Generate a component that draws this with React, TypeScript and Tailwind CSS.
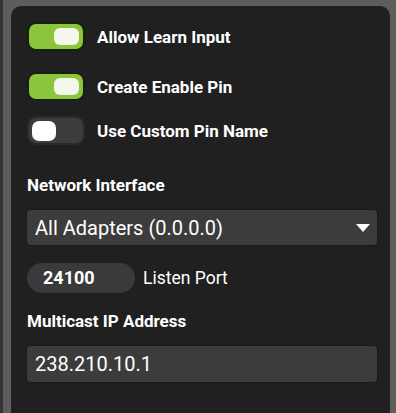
import * as React from "react";

function Toggle({ on }: { on: boolean }) {
  return (
    <div
      className={
        on
          ? "flex h-[29px] w-[58px] items-center justify-end rounded-[9px] border-2 border-[#16210a] bg-[#8cc43c] pr-[4px]"
          : "flex h-[29px] w-[58px] items-center justify-start rounded-[9px] border-2 border-[#2a2a2a] bg-[#3d3d3d] pl-[3px]"
      }
    >
      <div
        className={
          on
            ? "h-[17px] w-[25px] rounded-[6px] bg-[#f4f8ec]"
            : "h-[20px] w-[24px] rounded-[7px] bg-white"
        }
      />
    </div>
  );
}

function ToggleRow({ on, label, className }: { on: boolean; label: string; className?: string }) {
  return (
    <div className={"flex items-center gap-[12px] " + (className ?? "")}>
      <Toggle on={on} />
      <span className="text-[17px] font-bold leading-[20px] text-white">{label}</span>
    </div>
  );
}

export default function App() {
  return (
    <div
      className="flex h-[413px] w-[396px] border-l-[3px] border-[#343434] bg-[#5d5d5d] pl-[8px] pr-[6px] pt-[6px]"
      style={{ fontFamily: "Roboto, 'Liberation Sans', sans-serif" }}
    >
      <div className="flex flex-1 flex-col rounded-t-[10px] bg-[#202020] pl-[16px] pr-[13px] pt-[16px]">
        <ToggleRow on label="Allow Learn Input" />
        <ToggleRow on label="Create Enable Pin" className="mt-[21px]" />
        <ToggleRow on={false} label="Use Custom Pin Name" className="mt-[15px]" />

        <div className="mt-[30px] text-[17px] font-bold leading-[20px] text-white">Network Interface</div>
        <div className="mt-[15px] flex h-[35px] items-center justify-between rounded-[4px] bg-[#3c3c3c] pl-[8px] pr-[7px] shadow-[0_0_0_1px_#1a1a1a]">
          <span className="text-[20px] leading-[24px] text-white">All Adapters (0.0.0.0)</span>
          <svg width="14" height="8" viewBox="0 0 14 8">
            <path d="M0 0 L14 0 L7 8 Z" fill="#ffffff" />
          </svg>
        </div>

        <div className="mt-[18px] flex items-center gap-[8px]">
          <div className="flex h-[30px] w-[108px] items-center rounded-full bg-[#3a3a3a] pl-[16px]">
            <span className="text-[18px] font-bold leading-[20px] text-white">24100</span>
          </div>
          <span className="text-[17.5px] leading-[20px] text-white">Listen Port</span>
        </div>

        <div className="mt-[18px] text-[17px] font-bold leading-[20px] text-white">Multicast IP Address</div>
        <div className="mt-[15px] flex h-[36px] items-center rounded-[4px] bg-[#3c3c3c] pl-[8px] shadow-[0_0_0_1px_#1a1a1a]">
          <span className="text-[20px] leading-[24px] text-white">238.210.10.1</span>
        </div>
      </div>
    </div>
  );
}
